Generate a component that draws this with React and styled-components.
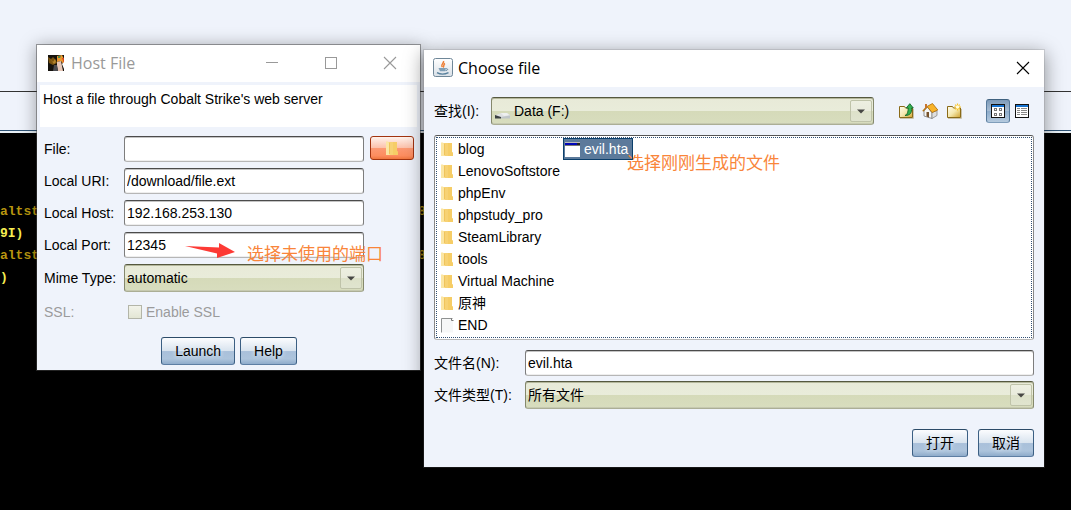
import React from "react";
import styled, { createGlobalStyle, css } from "styled-components";

const GlobalStyle = createGlobalStyle`
  *, *::before, *::after { box-sizing: border-box; }
  body { margin: 0; background: #000; }
  body, button, input, select {
    font-family: "Liberation Sans", "Noto Sans CJK SC", sans-serif;
    font-size: 14px;
    line-height: 20px;
    color: #000;
  }
`;

/* ---------- desktop behind the dialogs ---------- */

const Desktop = styled.main`
  position: relative;
  min-height: 100vh;
  min-width: 960px;
  overflow: hidden;
  background: #000;
`;

const TopPane = styled.div`
  height: 92px;
  background: #eff3fb;
  border-bottom: 1px solid #333;
`;

const TabPane = styled.div`
  height: 39px;
  background: #eff3fb;
  border-bottom: 1px solid #2f5375;
`;

const PaneEdge = styled.div`
  height: 2px;
  background: #e8f0f6;
`;

const Terminal = styled.div`
  padding-top: 68px;
  font: bold 13px/22px "Liberation Mono", monospace;
`;

const TerminalLine = styled.div`
  display: grid;
  grid-template-columns: 418px 1fr;
  height: 22px;
  color: ${(p) => (p.$bright ? "#f7ee52" : "#b8960f")};
`;

/* ---------- dialogs ---------- */

const Dialog = styled.section`
  position: absolute;
  background: #eff3fb;
  background-clip: padding-box;
`;

const HostDialog = styled(Dialog)`
  left: 36px;
  top: 44px;
  width: 385px;
  border: 1px solid rgba(70, 70, 70, 0.5);
  box-shadow: 0 2px 16px rgba(0, 0, 0, 0.35);
`;

const ChooseDialog = styled(Dialog)`
  left: 423px;
  right: 26px;
  top: 49px;
  border: 1px solid rgba(110, 110, 110, 0.2);
  box-shadow: 0 4px 18px rgba(0, 0, 0, 0.4);
`;

const TitleBar = styled.header`
  display: flex;
  align-items: center;
  height: 37px;
  padding: 0 ${(p) => (p.$active ? 14 : 23)}px 2px ${(p) => (p.$active ? 9 : 11)}px;
  background: #fff;
  color: ${(p) => (p.$active ? "#000" : "#999")};
`;

const Title = styled.h1`
  flex: 1;
  margin: 0 0 0 ${(p) => (p.$wide ? 7 : 5)}px;
  font: 16px/24px "Open Sans", sans-serif;
`;

const WindowControls = styled.div`
  display: flex;
  gap: 45px;
`;

const PlainButton = styled.button`
  display: flex;
  padding: 0;
  border: 0;
  background: none;
  color: inherit;
`;

const HostBody = styled.div`
  padding: 3px 3px 5px;
`;

const Description = styled.p`
  margin: 0;
  height: 42px;
  padding: 4px 3px;
  background: #fff;
`;

const HostForm = styled.form`
  padding: 9px 3px 0 4px;
`;

const FormGrid = styled.div`
  display: grid;
  grid-template-columns: 80px 1fr 50px;
  row-gap: 6px;
  align-items: center;
`;

const Label = styled.label`
  white-space: nowrap;
  color: ${(p) => (p.$dim ? "#9b9b9b" : "#000")};
`;

const TextField = styled.input`
  width: 100%;
  min-width: 0;
  height: 26px;
  padding: 0 2px;
  border: 1px solid;
  border-color: #4b4b4b #7d7d7d #b6b6b6;
  border-radius: 3px;
  background: #fff;
  box-shadow: inset 0 1px 0 #c4c4c4, inset 0 -1px 0 #eee;
  outline: none;
`;

const Combo = styled.div`
  display: flex;
  align-items: center;
  width: 100%;
  min-width: 0;
  height: 28px;
  padding: 0 1px 0 2px;
  border: 1px solid;
  border-color: #55583f #85886c #abae95;
  border-radius: 3px;
  background: linear-gradient(#e8ead8, #e9ecda 50%, #d5dab9 50%, #d8ddbe);
  box-shadow: inset 0 1px 0 #b4b79b, inset 0 -1px 0 #c6c9b0;

  select {
    appearance: none;
    flex: 1;
    min-width: 0;
    height: 24px;
    padding: 0;
    border: 0;
    background: none;
    outline: none;
  }

  svg + select {
    margin-left: 4px;
  }
`;

const ComboArrow = styled.span`
  display: flex;
  align-items: center;
  justify-content: center;
  width: 22px;
  height: 22px;
  border: 1px solid #bfc3a9;
  border-radius: 2px;
  background: linear-gradient(#edefe1, #e9ebdc 50%, #dde1c9 50%, #e0e4cf);
  pointer-events: none;
`;

const BrowseButton = styled.button`
  display: flex;
  align-items: center;
  justify-content: center;
  align-self: start;
  width: 44px;
  height: 24px;
  margin-left: 6px;
  padding: 0;
  border: 1px solid #a23410;
  border-radius: 3px;
  background: linear-gradient(#fff2ec, #fcc3ad 48%, #fc9a74 50%, #fd8d5f 85%, #f0773f);
`;

const SslOption = styled.div`
  display: flex;
  align-items: center;
  gap: 4px;
  height: 28px;
  padding-left: 4px;
`;

const CheckBox = styled.input`
  appearance: none;
  width: 14px;
  height: 14px;
  margin: 0;
  border: 1px solid #b3b5a8;
  background: linear-gradient(#f2f3ea, #e3e6d4);
`;

const ButtonRow = styled.div`
  display: flex;
  justify-content: ${(p) => p.$align};
  gap: ${(p) => p.$gap}px;
  margin-top: ${(p) => p.$top}px;
`;

const PushButton = styled.button`
  height: 28px;
  min-width: 56px;
  padding: 0 13px;
  border: 1px solid;
  border-color: #2c4b68 #3b5f83 #5d7ea3;
  border-radius: 3px;
  background: linear-gradient(#fbfcfe, #d8e3ee 50%, #a9c0da 52%, #adc4dc 80%, #8faccb);
  text-shadow: 0 0 4px #dce7f2, 0 0 4px #dce7f2;
`;

const ChooseBody = styled.form`
  padding: 10px;
`;

const LookInRow = styled.div`
  display: grid;
  grid-template-columns: 57px 1fr auto;
  align-items: center;
`;

const ToolBar = styled.div`
  display: flex;
  align-items: center;
  gap: 8px;
  padding-left: 24px;
`;

const ViewToggle = styled.div`
  display: flex;
  padding-left: 16px;
`;

const ToggleButton = styled.button`
  display: flex;
  align-items: center;
  justify-content: center;
  width: 24px;
  height: 24px;
  padding: 0;
  border: 1px solid transparent;
  border-radius: 3px;
  background: none;
  ${(p) =>
    p.$on &&
    css`
      border-color: #3f617f #56799b #7f9dba;
      background: linear-gradient(#7e9bb9, #a8bdd3 50%, #8dabca 50%, #b5cade);
    `}
`;

const ListFrame = styled.div`
  margin: 10px 0;
  height: 205px;
  padding: 1px;
  border: 1px solid;
  border-color: #555 #888 #b6b6b6;
  border-radius: 3px;
  background: #fff;
`;

const FileList = styled.ul`
  display: grid;
  grid-template-rows: repeat(9, 22px);
  grid-auto-flow: column;
  grid-auto-columns: max-content;
  height: 100%;
  margin: 0;
  padding: 0;
  border: 1px dotted #2f4f74;
  list-style: none;
`;

const FileItem = styled.li`
  display: flex;
  align-items: center;
  gap: 3px;
  padding: 0 2px 0 1px;
  border: 1px solid transparent;
  white-space: nowrap;
  ${(p) =>
    p.$selected &&
    css`
      padding-right: 4px;
      border-color: #0c3f6b;
      background: #5c7a9b;
      color: #fff;
    `}
`;

const FileFields = styled.div`
  display: grid;
  grid-template-columns: 91px 1fr;
  row-gap: 5px;
  align-items: center;
`;

/* ---------- annotations drawn over the dialogs ---------- */

const Note = styled.p`
  position: absolute;
  left: ${(p) => p.$x}px;
  top: ${(p) => p.$y}px;
  display: flex;
  align-items: flex-start;
  margin: 0;
  font: 17px/24px "Noto Sans CJK SC", sans-serif;
  color: #f9853a;
  white-space: nowrap;
  pointer-events: none;
`;

const ArrowMark = styled.svg`
  margin: 0 12px 0 0;
`;

/* ---------- icons ---------- */

const DownArrow = () => (
  <ComboArrow>
    <svg width="8" height="5" viewBox="0 0 8 5" aria-hidden="true">
      <path d="M0 0.5H8L4 4.5Z" fill="#474744" />
    </svg>
  </ComboArrow>
);

const FolderIcon = () => (
  <svg width="16" height="16" viewBox="0 0 16 16" aria-hidden="true">
    <path d="M2 2H13V11.5H14V15H2Z" fill="#f7d274" />
    <path d="M9 2H13V11.5H14V15H9Z" fill="#f6cd66" />
    <path d="M2 1.5H4L5.5 3.5V15H2Z" fill="#fbe6a4" />
    <path d="M5 3H6V14H5Z" fill="#f0c45c" />
  </svg>
);

const PageIcon = () => (
  <svg width="16" height="16" viewBox="0 0 16 16" aria-hidden="true">
    <path d="M2.5 15.5V1.5H11L14 4.5V15.5" fill="#f6f7f7" />
    <path d="M2.5 15.5V1.5H13.5" fill="none" stroke="#8f9292" />
    <path d="M12.5 1.5V3.5H14.5" fill="none" stroke="#777" />
  </svg>
);

const ProgramIcon = () => (
  <svg width="16" height="16" viewBox="0 0 16 16" aria-hidden="true">
    <rect x="0" y="1" width="15" height="15" fill="#fff" />
    <rect x="0" y="1" width="15" height="1" fill="#bbb" />
    <rect x="0" y="2" width="12" height="2" fill="#0006b8" />
    <rect x="12" y="2" width="3" height="2" fill="#222" />
    <rect x="0" y="4" width="15" height="1" fill="#777" />
  </svg>
);

const DriveIcon = () => (
  <svg width="16" height="16" viewBox="0 0 16 16" aria-hidden="true">
    <path d="M1 12.5L7 10H13L16 12V15H6Z" fill="#dfe1e2" />
    <path d="M7 10H13L15 12L10 13Z" fill="#eef0f0" />
    <path d="M1 12L7 14V15.5H1Z" fill="#3a4042" />
    <path d="M7 14L16 12.5V15.5H7Z" fill="#bfc5c8" />
  </svg>
);

const JavaIcon = () => (
  <svg width="20" height="19" viewBox="0 0 20 19" aria-hidden="true">
    <defs>
      <linearGradient id="javaTile" x2="0" y2="1">
        <stop offset="0" stopColor="#fff" />
        <stop offset="1" stopColor="#d9e0e7" />
      </linearGradient>
    </defs>
    <rect x="0.5" y="0.5" width="19" height="18" rx="2" fill="url(#javaTile)" stroke="#6f8798" />
    <path d="M10.5 3C11.5 5 7.5 6 9 9M12 5.5C10 6.5 11.5 8 10 9.5" fill="none" stroke="#ee7d32" strokeWidth="1.5" />
    <path d="M5.5 10H13L12 13.2H7Z" fill="#7f9fb6" />
    <path d="M12.8 10.8C15.5 10.3 15 12.6 12.5 12.6" fill="none" stroke="#57809c" />
    <path d="M4 14.6C7 16.3 12 16.3 15.5 14.6" fill="none" stroke="#57809c" strokeWidth="1.3" />
  </svg>
);

const StrikeIcon = () => (
  <svg width="16" height="16" viewBox="0 0 16 16" aria-hidden="true">
    <rect width="16" height="16" fill="#15120d" />
    <path d="M0 2L3 4L5 2L8 5L9 8L5 10L1 8Z" fill="#7b5410" />
    <path d="M2 4L5 7L7 4L8 7L6 9Z" fill="#b5852c" />
    <path d="M9 1L14 0L16 4V10L13 6L9 7Z" fill="#e9962e" />
    <path d="M10 1H13L12 3H10Z" fill="#4e8a4a" />
    <path d="M9 7L13 6L14 11L15 16H10L9 11Z" fill="#e6c6b6" />
    <path d="M14 9L16 7V14Z" fill="#fff" />
    <path d="M6 10L9 10L10 16H5Z" fill="#4a4b50" />
    <path d="M14 3H16V8Z" fill="#d9431d" />
  </svg>
);

const folderShape = (
  <>
    <path d="M1.5 14.5V3.5H6.5L7.5 5H14.5V14.5Z" fill="url(#folderFill)" stroke="#8a6a18" />
    <path d="M2 15.5H15.5V6" fill="none" stroke="#c9c3ae" />
  </>
);

const UpFolderIcon = () => (
  <svg width="16" height="16" viewBox="0 0 16 16" aria-hidden="true">
    <defs>
      <linearGradient id="folderFill" x2="1" y2="1">
        <stop offset="0" stopColor="#fffdf0" />
        <stop offset="0.5" stopColor="#f5e8ae" />
        <stop offset="1" stopColor="#cfa12c" />
      </linearGradient>
    </defs>
    {folderShape}
    <path d="M7 12.5C10 11.5 9.8 9 10.3 5H8.3L11.8 0.7L15.3 5H13.6C14 10 12 12.5 7 12.5Z" fill="#35b150" stroke="#12682a" strokeWidth="0.9" />
  </svg>
);

const HomeIcon = () => (
  <svg width="16" height="16" viewBox="0 0 16 16" aria-hidden="true">
    <path d="M2 8L5.5 4L10 10V15.5L2 13Z" fill="#f7f7f5" stroke="#777" strokeWidth="0.8" />
    <path d="M10 9.5L15 7.5V12.5L10 15.5Z" fill="#dedede" stroke="#888" strokeWidth="0.8" />
    <path d="M5 3.5L10.5 0.5L15.8 7L10.2 9.5Z" fill="#f8b329" stroke="#a96a09" strokeWidth="0.8" />
    <path d="M5 3.5L0.8 8.2" stroke="#b5730f" strokeWidth="1.3" />
    <path d="M4.5 9H7V14.5L4.5 13.6Z" fill="#77512a" />
    <path d="M3 1H5V4L3 6Z" fill="#c7752f" />
  </svg>
);

const NewFolderIcon = () => (
  <svg width="16" height="16" viewBox="0 0 16 16" aria-hidden="true">
    {folderShape}
    <path d="M11.5 0.5V7.5M8 4H15M9.2 1.7L13.8 6.3M13.8 1.7L9.2 6.3" stroke="#fbc629" strokeWidth="1.2" />
    <circle cx="11.5" cy="4" r="1.7" fill="#fffce0" />
  </svg>
);

const ViewFrame = ({ children }) => (
  <svg width="14" height="14" viewBox="0 0 14 14" aria-hidden="true" shapeRendering="crispEdges">
    <rect x="0.5" y="0.5" width="13" height="13" fill="#fff" stroke="#111" />
    <rect x="1" y="1" width="12" height="2" fill="#1673d1" />
    {children}
  </svg>
);

const GridViewIcon = () => (
  <ViewFrame>
    <path d="M3.5 4.5h2v2h-2zM8.5 4.5h2v2h-2zM3.5 9.5h2v2h-2zM8.5 9.5h2v2h-2z" fill="#fff" stroke="#777" />
  </ViewFrame>
);

const DetailViewIcon = () => (
  <ViewFrame>
    <path d="M2 4.5h3M6 4.5h6M2 6.5h3M6 6.5h6M2 8.5h3M6 8.5h6M2 10.5h3M6 10.5h6" stroke="#888" />
  </ViewFrame>
);

const CloseIcon = () => (
  <svg width="14" height="14" viewBox="0 0 14 14" aria-hidden="true">
    <path d="M1 1L13 13M13 1L1 13" stroke="currentColor" strokeWidth="1.1" />
  </svg>
);

/* ---------- content ---------- */

const terminalLines = [
  { left: "altst", right: "8" },
  { left: "9I)", bright: true },
  { left: "altst", right: "8" },
  { left: ")", bright: true },
];

const files = [
  { name: "blog" },
  { name: "LenovoSoftstore" },
  { name: "phpEnv" },
  { name: "phpstudy_pro" },
  { name: "SteamLibrary" },
  { name: "tools" },
  { name: "Virtual Machine" },
  { name: "原神" },
  { name: "END", Icon: PageIcon },
  { name: "evil.hta", Icon: ProgramIcon, selected: true },
];

function HostFileDialog() {
  return (
    <HostDialog aria-label="Host File">
      <TitleBar>
        <StrikeIcon />
        <Title $wide>Host File</Title>
        <WindowControls>
          <PlainButton type="button" aria-label="Minimize">
            <svg width="14" height="14" viewBox="0 0 14 14"><path d="M1 6.5H13" stroke="currentColor" /></svg>
          </PlainButton>
          <PlainButton type="button" aria-label="Maximize">
            <svg width="14" height="14" viewBox="0 0 14 14"><rect x="1.5" y="1.5" width="11" height="11" fill="none" stroke="currentColor" /></svg>
          </PlainButton>
          <PlainButton type="button" aria-label="Close"><CloseIcon /></PlainButton>
        </WindowControls>
      </TitleBar>
      <HostBody>
        <Description>Host a file through Cobalt Strike's web server</Description>
        <HostForm>
          <FormGrid>
            <Label htmlFor="file">File:</Label>
            <TextField id="file" />
            <BrowseButton type="button" aria-label="Browse"><FolderIcon /></BrowseButton>
            <Label htmlFor="uri">Local URI:</Label>
            <TextField id="uri" defaultValue="/download/file.ext" />
            <span />
            <Label htmlFor="host">Local Host:</Label>
            <TextField id="host" defaultValue="192.168.253.130" />
            <span />
            <Label htmlFor="port">Local Port:</Label>
            <TextField id="port" defaultValue="12345" />
            <span />
            <Label htmlFor="mime">Mime Type:</Label>
            <Combo>
              <select id="mime"><option>automatic</option></select>
              <DownArrow />
            </Combo>
            <span />
            <Label as="span" $dim>SSL:</Label>
            <SslOption>
              <CheckBox id="ssl" type="checkbox" disabled />
              <Label htmlFor="ssl" $dim>Enable SSL</Label>
            </SslOption>
          </FormGrid>
          <ButtonRow $align="center" $gap={5} $top={11}>
            <PushButton type="button">Launch</PushButton>
            <PushButton type="button">Help</PushButton>
          </ButtonRow>
        </HostForm>
      </HostBody>
    </HostDialog>
  );
}

function ChooseFileDialog() {
  return (
    <ChooseDialog aria-label="Choose file">
      <TitleBar $active>
        <JavaIcon />
        <Title>Choose file</Title>
        <PlainButton type="button" aria-label="Close"><CloseIcon /></PlainButton>
      </TitleBar>
      <ChooseBody>
        <LookInRow>
          <Label htmlFor="lookin">查找(I):</Label>
          <Combo>
            <DriveIcon />
            <select id="lookin"><option>Data (F:)</option></select>
            <DownArrow />
          </Combo>
          <ToolBar>
            <PlainButton type="button" aria-label="Up one level"><UpFolderIcon /></PlainButton>
            <PlainButton type="button" aria-label="Home"><HomeIcon /></PlainButton>
            <PlainButton type="button" aria-label="New folder"><NewFolderIcon /></PlainButton>
            <ViewToggle>
              <ToggleButton type="button" $on aria-label="List"><GridViewIcon /></ToggleButton>
              <ToggleButton type="button" aria-label="Details"><DetailViewIcon /></ToggleButton>
            </ViewToggle>
          </ToolBar>
        </LookInRow>
        <ListFrame>
          <FileList>
            {files.map(({ name, Icon = FolderIcon, selected }) => (
              <FileItem key={name} $selected={selected}>
                <Icon />
                {name}
              </FileItem>
            ))}
          </FileList>
        </ListFrame>
        <FileFields>
          <Label htmlFor="filename">文件名(N):</Label>
          <TextField id="filename" defaultValue="evil.hta" />
          <Label htmlFor="filetype">文件类型(T):</Label>
          <Combo>
            <select id="filetype"><option>所有文件</option></select>
            <DownArrow />
          </Combo>
        </FileFields>
        <ButtonRow $align="flex-end" $gap={10} $top={20}>
          <PushButton type="button">打开</PushButton>
          <PushButton type="button">取消</PushButton>
        </ButtonRow>
      </ChooseBody>
    </ChooseDialog>
  );
}

export default function App() {
  return (
    <Desktop>
      <GlobalStyle />
      <TopPane />
      <TabPane />
      <PaneEdge />
      <Terminal>
        {terminalLines.map((line, i) => (
          <TerminalLine key={i} $bright={line.bright}>
            <span>{line.left}</span>
            <span>{line.right}</span>
          </TerminalLine>
        ))}
      </Terminal>
      <HostFileDialog />
      <ChooseFileDialog />
      <Note $x={185} $y={241}>
        <ArrowMark width="50" height="18" viewBox="0 0 50 18" aria-hidden="true">
          <path d="M0 5L34 6.5V2L50 11L32 17V12.5Z" fill="#fd3a35" />
        </ArrowMark>
        选择未使用的端口
      </Note>
      <Note $x={627} $y={150}>选择刚刚生成的文件</Note>
    </Desktop>
  );
}
